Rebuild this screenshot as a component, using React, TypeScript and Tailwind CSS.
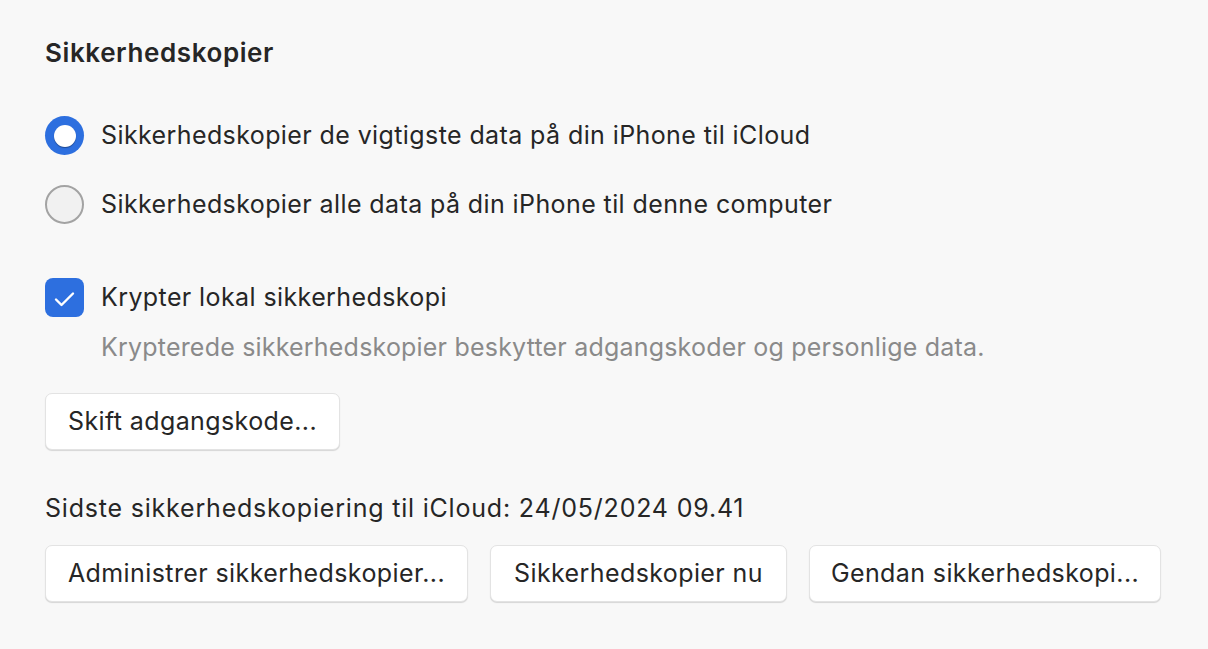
import React from 'react';

const font = { fontFamily: 'Inter, "Noto Sans", sans-serif' };

function Radio({ checked }: { checked: boolean }) {
  if (checked) {
    return (
      <div className="flex h-[39px] w-[39px] shrink-0 items-center justify-center rounded-full bg-[#2d6fdf]">
        <div className="h-[22px] w-[22px] rounded-full bg-white shadow-[0_1px_1px_rgba(0,0,0,0.35)]" />
      </div>
    );
  }
  return <div className="h-[39px] w-[39px] shrink-0 rounded-full border-2 border-[#a3a3a3] bg-[#f1f1f1]" />;
}

function Button({ label, w }: { label: string; w: string }) {
  return (
    <button
      className={`flex h-[57px] ${w} items-center justify-center rounded-[7px] border border-[#e3e3e3] bg-white text-[25px] tracking-[0.4px] text-[#262626] shadow-[0_1px_1px_rgba(0,0,0,0.14)]`}
    >
      {label}
    </button>
  );
}

export default function App() {
  const options = [
    { label: 'Sikkerhedskopier de vigtigste data på din iPhone til iCloud', checked: true },
    { label: 'Sikkerhedskopier alle data på din iPhone til denne computer', checked: false },
  ];

  return (
    <div className="h-[649px] w-[1208px] bg-[#f8f8f8] text-[#262626]" style={font}>
      <div className="px-[45px] pt-[36px]">
        <h2 className="text-[26px] font-semibold leading-[34px] tracking-[0.6px]">Sikkerhedskopier</h2>

        {/* radio group */}
        <div className="mt-[46px] flex flex-col gap-[30px]">
          {options.map((o) => (
            <div key={o.label} className="flex items-center gap-[17px]">
              <Radio checked={o.checked} />
              <span className="text-[25px] leading-[39px] tracking-[0.4px]">{o.label}</span>
            </div>
          ))}
        </div>

        {/* encrypt */}
        <div className="mt-[54px] flex items-center gap-[17px]">
          <div className="h-[39px] w-[39px] shrink-0 rounded-[8px] bg-[#2d6fdf]">
            <svg width="39" height="39" viewBox="0 0 39 39" fill="none">
              <path d="M11 21.5l5.5 5.5L28 15.5" stroke="white" strokeWidth="2.4" strokeLinecap="round" strokeLinejoin="round" />
            </svg>
          </div>
          <span className="text-[25px] leading-[39px] tracking-[0.4px]">Krypter lokal sikkerhedskopi</span>
        </div>
        <p className="ml-[56px] mt-[15px] text-[25px] leading-[30px] tracking-[0.2px] text-[#8a8a8a]">
          Krypterede sikkerhedskopier beskytter adgangskoder og personlige data.
        </p>

        <div className="mt-[31px] flex">
          <Button label="Skift adgangskode..." w="w-[295px]" />
        </div>

        <p className="mt-[43px] text-[25px] leading-[30px] tracking-[0.8px]">Sidste sikkerhedskopiering til iCloud: 24/05/2024 09.41</p>

        <div className="mt-[22px] flex gap-[22px]">
          <Button label="Administrer sikkerhedskopier..." w="w-[423px]" />
          <Button label="Sikkerhedskopier nu" w="w-[297px]" />
          <Button label="Gendan sikkerhedskopi..." w="w-[352px]" />
        </div>
      </div>
    </div>
  );
}
